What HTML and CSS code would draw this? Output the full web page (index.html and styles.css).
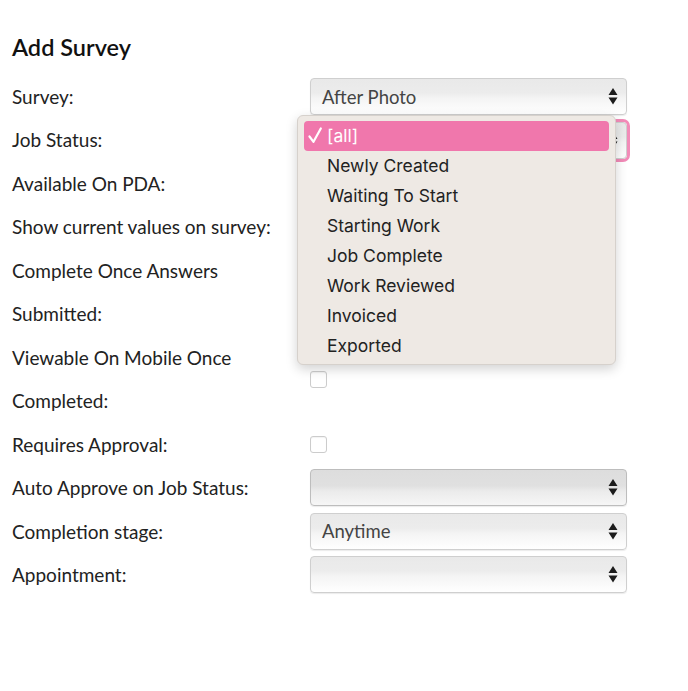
FILE: index.html
```html
<!DOCTYPE html>
<html lang="en">

<head>
    <meta charset="UTF-8">
    <meta name="viewport" content="width=device-width, initial-scale=1.0">
    <title>Add Survey</title>
    <link rel="stylesheet" href="styles.css">
</head>

<body>
    <h2 class="title">Add Survey</h2>

    <div class="survey-form">
        <!-- Survey -->
        <div class="label">Survey:</div>
        <div class="field">
            <div class="select">
                <span class="select-value">After Photo</span>
                <svg class="arrows" width="10" height="17" viewBox="0 0 10 17"><path d="M5 0 L9.5 7 L0.5 7 Z M0.5 9.5 L9.5 9.5 L5 16.5 Z" fill="#1c1c1c"/></svg>
            </div>
        </div>

        <!-- Job status, open -->
        <div class="label">Job Status:</div>
        <div class="field field-open">
            <div class="select select-focus">
                <span class="select-value"></span>
                <svg class="arrows" width="10" height="17" viewBox="0 0 10 17"><path d="M5 0 L9.5 7 L0.5 7 Z M0.5 9.5 L9.5 9.5 L5 16.5 Z" fill="#1c1c1c"/></svg>
            </div>
            <ul class="menu">
                <li class="menu-item selected">
                    <svg class="tick" width="14" height="17" viewBox="0 0 14 17"><path d="M1.5 9.5 L5.5 14.8 L12.8 1.5" fill="none" stroke="#ffffff" stroke-width="2.2" stroke-linecap="round" stroke-linejoin="round"/></svg>[all]
                </li>
                <li class="menu-item">Newly Created</li>
                <li class="menu-item">Waiting To Start</li>
                <li class="menu-item">Starting Work</li>
                <li class="menu-item">Job Complete</li>
                <li class="menu-item">Work Reviewed</li>
                <li class="menu-item">Invoiced</li>
                <li class="menu-item">Exported</li>
            </ul>
        </div>

        <div class="label">Available On PDA:</div>
        <div class="field"><span class="checkbox"></span></div>

        <div class="label">Show current values on survey:</div>
        <div class="field"><span class="checkbox"></span></div>

        <div class="label">Complete Once Answers Submitted:</div>
        <div class="field"><span class="checkbox"></span></div>

        <div class="label">Viewable On Mobile Once Completed:</div>
        <div class="field"><span class="checkbox"></span></div>

        <div class="label">Requires Approval:</div>
        <div class="field"><span class="checkbox"></span></div>

        <div class="label">Auto Approve on Job Status:</div>
        <div class="field">
            <div class="select select-dim">
                <span class="select-value"></span>
                <svg class="arrows" width="10" height="17" viewBox="0 0 10 17"><path d="M5 0 L9.5 7 L0.5 7 Z M0.5 9.5 L9.5 9.5 L5 16.5 Z" fill="#1c1c1c"/></svg>
            </div>
        </div>

        <div class="label">Completion stage:</div>
        <div class="field">
            <div class="select">
                <span class="select-value">Anytime</span>
                <svg class="arrows" width="10" height="17" viewBox="0 0 10 17"><path d="M5 0 L9.5 7 L0.5 7 Z M0.5 9.5 L9.5 9.5 L5 16.5 Z" fill="#1c1c1c"/></svg>
            </div>
        </div>

        <div class="label">Appointment:</div>
        <div class="field">
            <div class="select">
                <span class="select-value"></span>
                <svg class="arrows" width="10" height="17" viewBox="0 0 10 17"><path d="M5 0 L9.5 7 L0.5 7 Z M0.5 9.5 L9.5 9.5 L5 16.5 Z" fill="#1c1c1c"/></svg>
            </div>
        </div>
    </div>
</body>

</html>
```

FILE: styles.css
```css
body {
    font-family: Lato, "Noto Sans", sans-serif;
    background: #ffffff;
    color: #222222;
    margin: 0;
    padding: 0 12px;
}

.title {
    font-size: 23.5px;
    font-weight: 600;
    line-height: 26px;
    color: #111111;
    margin: 34px 0 15px;
}

.survey-form {
    display: grid;
    grid-template-columns: 298px 317px;
    align-items: center;
}

.label {
    font-size: 19px;
    line-height: 43.45px;
    padding-right: 10px;
    color: #222222;
}

.field {
    position: relative;
    display: flex;
    align-items: center;
}

/* Fake select boxes */
.select {
    box-sizing: border-box;
    width: 317px;
    height: 37px;
    display: flex;
    align-items: center;
    justify-content: space-between;
    padding: 0 8px 0 11px;
    border: 1px solid #cfcfcf;
    border-radius: 4px;
    background: linear-gradient(#e9e9e9 0%, #ececec 40%, #f4f4f4 55%, #ffffff 100%);
    box-shadow: 0 1px 1px rgba(0, 0, 0, 0.08);
}

.select-value {
    font-size: 18.5px;
    color: #444444;
}

.select-dim {
    border-color: #bdbdbd;
    background: linear-gradient(#dddddd 0%, #e0e0e0 45%, #ebebeb 60%, #f6f6f6 100%);
}

.select-focus {
    outline: 3px solid #f28bb8;
    outline-offset: 0;
}

.checkbox {
    display: block;
    box-sizing: border-box;
    width: 17px;
    height: 17px;
    border: 1px solid #cccccc;
    border-radius: 3px;
    background: #ffffff;
    box-shadow: inset 0 1px 1px rgba(0, 0, 0, 0.05);
}

/* Open dropdown list */
.menu {
    position: absolute;
    top: -7px;
    left: -13px;
    z-index: 5;
    box-sizing: border-box;
    width: 319px;
    margin: 0;
    padding: 5px 6px 3px;
    list-style: none;
    background: #eee9e4;
    border: 1px solid #d6d1cc;
    border-radius: 6px;
    box-shadow: 0 4px 12px rgba(0, 0, 0, 0.18);
    font-family: Inter, "Noto Sans", sans-serif;
}

.menu-item {
    position: relative;
    height: 30px;
    line-height: 30px;
    padding-left: 23px;
    font-size: 17.5px;
    color: #222222;
    border-radius: 4px;
}

.menu-item.selected {
    background: #f077ac;
    color: #ffffff;
}

.tick {
    position: absolute;
    left: 4px;
    top: 6px;
}
```
